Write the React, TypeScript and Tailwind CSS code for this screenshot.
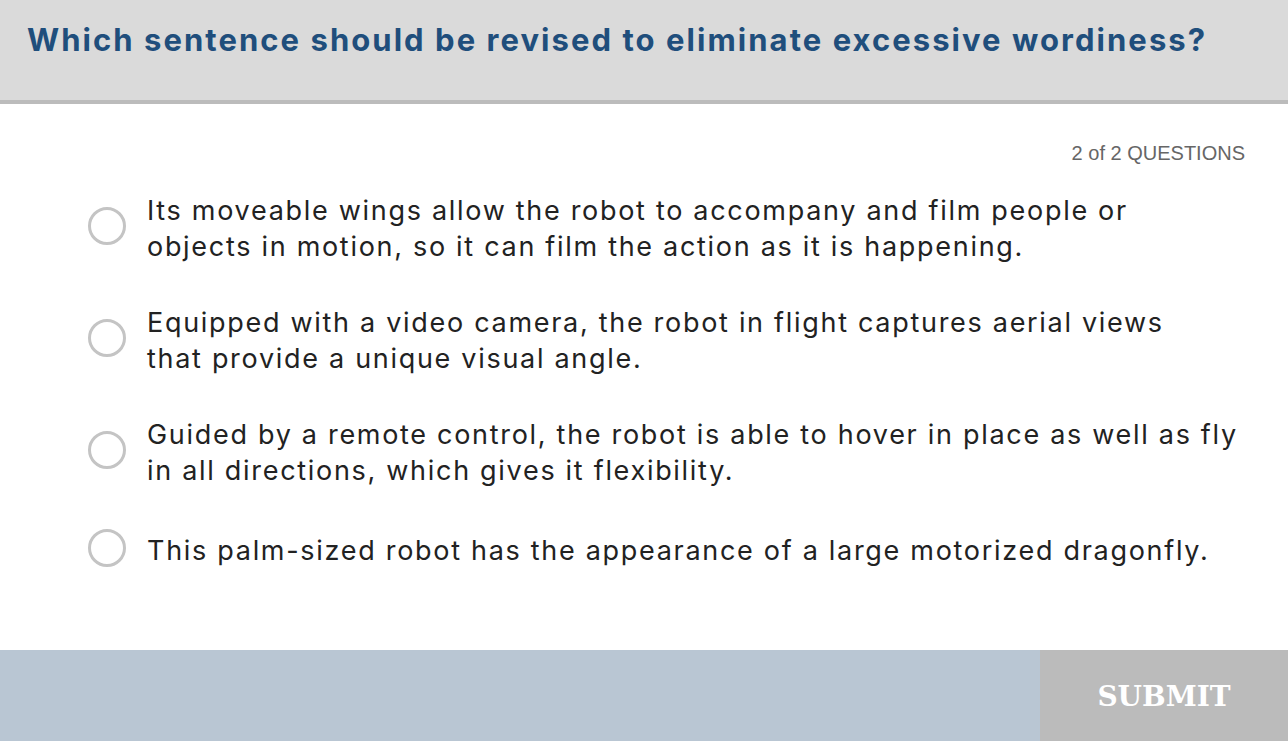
import React from "react";

const options: string[][] = [
  [
    "Its moveable wings allow the robot to accompany and film people or",
    "objects in motion, so it can film the action as it is happening.",
  ],
  [
    "Equipped with a video camera, the robot in flight captures aerial views",
    "that provide a unique visual angle.",
  ],
  [
    "Guided by a remote control, the robot is able to hover in place as well as fly",
    "in all directions, which gives it flexibility.",
  ],
  ["This palm-sized robot has the appearance of a large motorized dragonfly."],
];

const Option = ({ lines }: { lines: string[] }) => (
  <li className="flex items-center py-5">
    <span className="mb-[6px] ml-[88px] h-[38px] w-[38px] shrink-0 rounded-full border-[3px] border-[#c4c4c4]" />
    <p className="ml-[21px] text-[27px] leading-[36px] tracking-[1.7px] text-[#222]">
      {lines.map((line, i) => (
        <React.Fragment key={i}>
          {i > 0 && <br />}
          {line}
        </React.Fragment>
      ))}
    </p>
  </li>
);

export default function App() {
  return (
    <div className="flex h-screen flex-col bg-white font-['Inter',sans-serif]">
      <header className="h-[104px] shrink-0 border-b-4 border-[#bcbcbc] bg-[#dadada] pl-[27px] pt-[20px]">
        <h1 className="whitespace-nowrap text-[31px] font-bold leading-[40px] tracking-[2.05px] text-[#1f4e7c]">
          Which sentence should be revised to eliminate excessive wordiness?
        </h1>
      </header>

      <main className="flex-1">
        <div className="pr-[43px] pt-[38px] text-right font-['Liberation_Sans',sans-serif] text-[20px] leading-[22px] text-[#666]">
          2 of 2 QUESTIONS
        </div>
        <ul className="pt-[9px]">
          {options.map((lines, i) => (
            <Option key={i} lines={lines} />
          ))}
        </ul>
      </main>

      <footer className="mb-[7px] flex h-[91px] shrink-0">
        <div className="flex-1 bg-[#b9c6d3]" />
        <button className="w-[248px] bg-[#bbbbbb] pt-[3px] font-['DejaVu_Serif',serif] text-[28px] font-bold text-white">
          SUBMIT
        </button>
      </footer>
    </div>
  );
}
